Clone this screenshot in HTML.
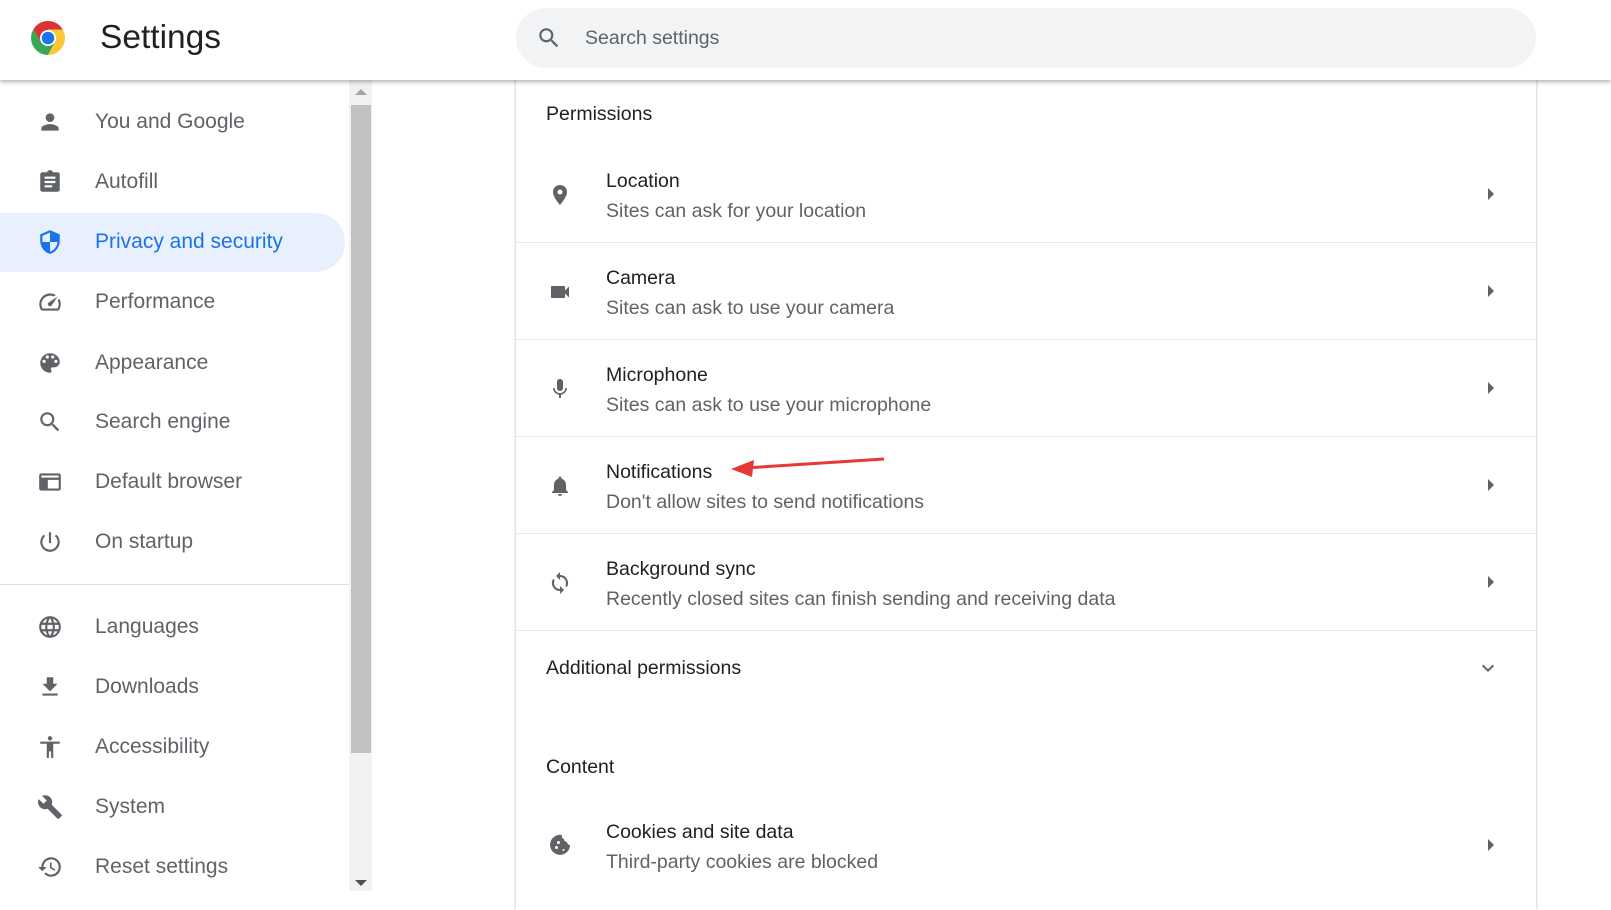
<!DOCTYPE html>
<html><head><style>
*{margin:0;padding:0;box-sizing:border-box}
body{width:1611px;height:891px;overflow:hidden;background:#fff;font-family:"Liberation Sans",Arial,sans-serif;position:relative;color:#202124}
.hdr{position:absolute;left:0;top:0;width:1611px;height:80px;background:#fff;box-shadow:0 2px 4px rgba(0,0,0,.3);z-index:5}
.abs{position:absolute}
.side .it{position:absolute;left:0;height:60px;width:345px;display:flex;align-items:center;font-size:21px;color:#5f6368}
.side .it svg{position:absolute;left:37px;width:26px;height:26px;fill:#5f6368}
.side .it span{position:absolute;left:95px}
.card{position:absolute;left:516px;top:80px;width:1020px;height:830px;background:#fff;box-shadow:0 0 3px rgba(0,0,0,.3)}
.row{position:absolute;left:0;width:1020px;height:97px;border-bottom:1px solid #e8eaed}
.row svg.ic{position:absolute;left:32px;top:37px;width:24px;height:24px;fill:#5f6368}
.row .t{position:absolute;left:90px;top:24px;font-size:19.5px;color:#202124}
.row .s{position:absolute;left:90px;top:54px;font-size:19.5px;color:#5f6368}
.row .ar{position:absolute;left:972px;top:42px;width:0;height:0;border-top:6px solid transparent;border-bottom:6px solid transparent;border-left:6px solid #5f6368}
.hd{position:absolute;left:30px;font-size:19.5px;color:#202124}
</style></head><body>
<div class="hdr">
<svg class="abs" style="left:31px;top:21px" width="34" height="34" viewBox="0 0 34 34">
<path d="M17 17 L17 0 A17 17 0 0 1 31.7 8.5 Z" fill="#db3236"/>
<path d="M17 0 A17 17 0 0 0 2.3 8.5 L10 21 L17 17Z" fill="#db3236"/>
<path d="M2.3 8.5 A17 17 0 0 0 17 34 L24 21 L10 21Z" fill="#3aa757"/>
<path d="M17 34 A17 17 0 0 0 31.7 8.5 L17 8.5 L24 21Z" fill="#fcc934"/>
<circle cx="17" cy="17" r="8" fill="#fff"/><circle cx="17" cy="17" r="6.3" fill="#1a73e8"/>
</svg>
<div class="abs" style="left:100px;top:19px;font-size:33.5px;color:#202124">Settings</div>
<div class="abs" style="left:516px;top:8px;width:1020px;height:60px;border-radius:30px;background:#f1f3f4"></div>
<svg class="abs" style="left:536px;top:25px" width="26" height="26" viewBox="0 0 24 24"><path fill="#5f6368" d="M15.5 14h-.79l-.28-.27A6.47 6.47 0 0016 9.5 6.5 6.5 0 109.5 16c1.61 0 3.09-.59 4.23-1.57l.27.28v.79l5 4.99L20.49 19l-4.99-5zm-6 0C7.01 14 5 11.99 5 9.5S7.01 5 9.5 5 14 7.01 14 9.5 11.99 14 9.5 14z"/></svg>
<div class="abs" style="left:585px;top:27px;font-size:19.5px;color:#5f6368">Search settings</div>
</div>

<div class="side">
<div class="abs" style="left:0;top:213px;width:345px;height:59px;background:#e8f0fe;border-radius:0 30px 30px 0"></div>
<div class="it" style="top:92px"><svg viewBox="0 0 24 24"><path d="M12 12c2.2 0 4-1.8 4-4s-1.8-4-4-4-4 1.8-4 4 1.8 4 4 4zm0 2c-2.7 0-8 1.3-8 4v2h16v-2c0-2.7-5.3-4-8-4z"/></svg><span>You and Google</span></div>
<div class="it" style="top:152px"><svg viewBox="0 0 24 24"><path d="M19 3h-4.2C14.4 1.8 13.3 1 12 1s-2.4.8-2.8 2H5c-1.1 0-2 .9-2 2v14c0 1.1.9 2 2 2h14c1.1 0 2-.9 2-2V5c0-1.1-.9-2-2-2zm-5 14H7v-2h7v2zm3-4H7v-2h10v2zm0-4H7V7h10v2z"/></svg><span>Autofill</span></div>
<div class="it" style="top:212px;color:#1a73e8"><svg viewBox="0 0 24 24" style="fill:#1a73e8"><path d="M12 1L3 5v6c0 5.5 3.8 10.7 9 12 5.2-1.3 9-6.5 9-12V5l-9-4zm0 11h7c-.5 4.1-3.3 7.8-7 8.9V12H5V6.3l7-3.1V12z"/></svg><span>Privacy and security</span></div>
<div class="it" style="top:272px"><svg viewBox="0 0 24 24"><path d="M20.4 8.6l-1.3 1.9A8 8 0 0118.9 18H5.1A8 8 0 0115.5 6.9l1.9-1.3A10 10 0 003.4 19a2 2 0 001.7 1h13.8a2 2 0 001.7-1 10 10 0 00-.2-10.4zM10.6 15.4a2 2 0 002.8 0l5.7-8.5-8.5 5.7a2 2 0 000 2.8z"/></svg><span>Performance</span></div>
<div class="it" style="top:333px"><svg viewBox="0 0 24 24"><path d="M12 3a9 9 0 000 18c.8 0 1.5-.7 1.5-1.5 0-.4-.1-.7-.4-1-.2-.3-.4-.6-.4-1 0-.8.7-1.5 1.5-1.5H16c2.8 0 5-2.2 5-5 0-4.4-4-8-9-8zm-5.5 9a1.5 1.5 0 110-3 1.5 1.5 0 010 3zm3-4a1.5 1.5 0 110-3 1.5 1.5 0 010 3zm5 0a1.5 1.5 0 110-3 1.5 1.5 0 010 3zm3 4a1.5 1.5 0 110-3 1.5 1.5 0 010 3z"/></svg><span>Appearance</span></div>
<div class="it" style="top:392px"><svg viewBox="0 0 24 24"><path d="M15.5 14h-.79l-.28-.27A6.47 6.47 0 0016 9.5 6.5 6.5 0 109.5 16c1.61 0 3.09-.59 4.23-1.57l.27.28v.79l5 4.99L20.49 19l-4.990-5zm-6 0C7.01 14 5 11.99 5 9.5S7.01 5 9.5 5 14 7.01 14 9.5 11.99 14 9.5 14z"/></svg><span>Search engine</span></div>
<div class="it" style="top:452px"><svg viewBox="0 0 24 24"><path d="M20 4H4c-1.1 0-2 .9-2 2v12c0 1.1.9 2 2 2h16c1.1 0 2-.9 2-2V6c0-1.1-.9-2-2-2zm0 14H4v-8h16v8zM4 8V6h16v2H4zm0 2h6v8H4z"/></svg><span>Default browser</span></div>
<div class="it" style="top:512px"><svg viewBox="0 0 24 24"><path d="M13 3h-2v10h2V3zm4.8 2.2l-1.4 1.4A6.9 6.9 0 0119 12a7 7 0 11-11.4-5.4L6.2 5.2A9 9 0 1021 12c0-2.7-1.200-5.2-3.2-6.8z"/></svg><span>On startup</span></div>
<div class="abs" style="left:0;top:584px;width:349px;height:1px;background:#e0e0e0"></div>
<div class="it" style="top:597px"><svg viewBox="0 0 24 24"><path d="M12 2a10 10 0 100 20 10 10 0 000-20zm6.9 6h-3a15.7 15.7 0 00-1.4-3.6A8 8 0 0118.9 8zM12 4c.8 1.2 1.5 2.5 1.9 4h-3.8c.4-1.4 1.1-2.8 1.9-4zM4.3 14a8.2 8.2 0 010-4h3.4a16.5 16.5 0 000 4H4.3zm.8 2h3a15.7 15.7 0 001.4 3.6A8 8 0 015.1 16zm3-8h-3a8 8 0 014.3-3.6C8.8 5.6 8.4 6.8 8.1 8zM12 20c-.8-1.2-1.5-2.5-1.9-4h3.8c-.4 1.4-1.1 2.8-1.9 4zm2.3-6H9.7a14.7 14.7 0 010-4h4.7a14.7 14.7 0 010 4zm.3 5.6c.6-1.1 1.1-2.3 1.4-3.6h3a8 8 0 01-4.4 3.6zm1.8-5.6a16.5 16.5 0 000-4h3.4a8.2 8.2 0 010 4h-3.4z"/></svg><span>Languages</span></div>
<div class="it" style="top:657px"><svg viewBox="0 0 24 24"><path d="M19 9h-4V3H9v6H5l7 7 7-7zM5 18v2h14v-2H5z"/></svg><span>Downloads</span></div>
<div class="it" style="top:717px"><svg viewBox="0 0 24 24"><path d="M12 2a2 2 0 110 4 2 2 0 010-4zm9 7h-6v13h-2v-6h-2v6H9V9H3V7h18v2z"/></svg><span>Accessibility</span></div>
<div class="it" style="top:777px"><svg viewBox="0 0 24 24"><path d="M22.7 19l-9.1-9.1c.9-2.3.4-5-1.5-6.9-2-2-5-2.4-7.4-1.3L9 6 6 9 1.6 4.7C.4 7.1.9 10.1 2.9 12.1c1.9 1.9 4.6 2.4 6.9 1.5l9.1 9.1c.4.4 1 .4 1.4 0l2.3-2.3c.5-.4.5-1.1.1-1.4z"/></svg><span>System</span></div>
<div class="it" style="top:837px"><svg viewBox="0 0 24 24"><path d="M13 3a9 9 0 00-9 9H1l3.9 3.9L9 12H6a7 7 0 112.1 5L6.7 18.4A9 9 0 1013 3zm-1 5v5l4.3 2.5.7-1.2-3.5-2.1V8H12z"/></svg><span>Reset settings</span></div>
</div>
<div class="abs" style="left:349px;top:80px;width:23px;height:811px;background:#f1f1f1"></div>
<div class="abs" style="left:351px;top:105px;width:20px;height:648px;background:#c1c1c1"></div>
<div class="abs" style="left:355px;top:89px;width:0;height:0;border-left:6px solid transparent;border-right:6px solid transparent;border-bottom:6px solid #a3a3a3"></div>
<div class="abs" style="left:355px;top:880px;width:0;height:0;border-left:6px solid transparent;border-right:6px solid transparent;border-top:6px solid #505050"></div>

<div class="card">
<div class="hd" style="top:23px">Permissions</div>
<div class="row" style="top:66px"><svg class="ic" viewBox="0 0 24 24"><path d="M12 2a7 7 0 00-7 7c0 5.3 7 13 7 13s7-7.7 7-13a7 7 0 00-7-7zm0 9.5a2.5 2.5 0 110-5 2.5 2.5 0 010 5z"/></svg><div class="t">Location</div><div class="s">Sites can ask for your location</div><div class="ar"></div></div>
<div class="row" style="top:163px"><svg class="ic" viewBox="0 0 24 24"><path d="M17 10.5V7c0-.6-.4-1-1-1H4c-.6 0-1 .4-1 1v10c0 .6.4 1 1 1h12c.6 0 1-.4 1-1v-3.5l4 4v-11l-4 4z"/></svg><div class="t">Camera</div><div class="s">Sites can ask to use your camera</div><div class="ar"></div></div>
<div class="row" style="top:260px"><svg class="ic" viewBox="0 0 24 24"><path d="M12 14c1.7 0 3-1.3 3-3V5c0-1.7-1.3-3-3-3S9 3.3 9 5v6c0 1.7 1.3 3 3 3zm5.3-3c0 3-2.5 5.1-5.3 5.1S6.7 14 6.7 11H5c0 3.4 2.7 6.2 6 6.7V21h2v-3.3c3.3-.5 6-3.3 6-6.7h-1.7z"/></svg><div class="t">Microphone</div><div class="s">Sites can ask to use your microphone</div><div class="ar"></div></div>
<div class="row" style="top:357px"><svg class="ic" viewBox="0 0 24 24"><path d="M12 22c1.1 0 2-.9 2-2h-4c0 1.1.9 2 2 2zm6-6v-5c0-3.1-1.6-5.6-4.5-6.3V4c0-.8-.7-1.5-1.5-1.5s-1.5.7-1.5 1.5v.7C7.6 5.4 6 7.9 6 11v5l-2 2v1h16v-1l-2-2z"/></svg><div class="t">Notifications</div><div class="s">Don't allow sites to send notifications</div><div class="ar"></div></div>
<div class="row" style="top:454px"><svg class="ic" viewBox="0 0 24 24"><path d="M12 4V1L8 5l4 4V6c3.3 0 6 2.7 6 6 0 1-.3 2-.7 2.8l1.5 1.5A8 8 0 0012 4zm0 14c-3.3 0-6-2.7-6-6 0-1 .3-2 .7-2.8L5.2 7.7A8 8 0 0012 20v3l4-4-4-4v3z"/></svg><div class="t">Background sync</div><div class="s">Recently closed sites can finish sending and receiving data</div><div class="ar"></div></div>
<div class="hd" style="top:577px">Additional permissions</div>
<svg class="abs" style="left:960px;top:576px" width="24" height="24" viewBox="0 0 24 24"><path d="M7.4 8.6L12 13.2l4.6-4.6L18 10l-6 6-6-6z" fill="#5f6368"/></svg>
<div class="hd" style="top:676px">Content</div>
<div class="row" style="top:717px;border:none"><svg class="ic" viewBox="0 0 24 24"><path d="M21.9 11A3 3 0 0119 8a3 3 0 01-3-3 3 3 0 01-2-4A10 10 0 1022 12l-.1-1zM8.5 15a1.5 1.5 0 110-3 1.5 1.5 0 010 3zm2-5a1.5 1.5 0 110-3 1.5 1.5 0 010 3zm5 7a1 1 0 110-2 1 1 0 010 2z"/></svg><div class="t">Cookies and site data</div><div class="s">Third-party cookies are blocked</div><div class="ar"></div></div>
</div>
<svg class="abs" style="left:0;top:0;z-index:6" width="1611" height="891"><line x1="884" y1="459" x2="745" y2="468" stroke="#e53935" stroke-width="3"/><path d="M731 469 L754 460 L752 477Z" fill="#e53935"/></svg>
</body></html>
